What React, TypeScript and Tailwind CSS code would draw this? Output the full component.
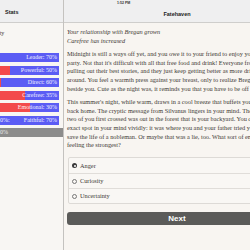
const BARS: ReadonlyArray<{ readonly label: string; readonly red: number; readonly left?: string }> = [
  { label: "Leader: 70%", red: 0 },
  { label: "Powerful: 50%", red: 10 },
  { label: "Direct: 60%", red: 1 },
  { label: "Carefree: 35%", red: 25 },
  { label: "Emotional: 30%", red: 30 },
  { label: "Faithful: 70%", red: 0, left: "0%:" },
];

const PARA_1 = [
  "Midnight is still a ways off yet, and you owe it to your friend to enjoy your",
  "party. Not that it's difficult with all that free food and drink! Everyone from",
  "pulling out their best stories, and they just keep getting better as more drinks",
  "around. You feel a warmth press against your breast, only to realize Bregan",
  "beside you. Cute as the night was, it reminds you that you have to be off at",
];

const PARA_2 = [
  "This summer's night, while warm, draws in a cool breeze that buffets you cold",
  "back home. The cryptic message from Silvanus lingers in your mind. The 'place",
  "two of you first crossed was out in the forest that is your backyard. You can",
  "exact spot in your mind vividly: it was where you and your father tried your",
  "save the life of a nobleman. Or maybe that was a lie, too. What sort of emotion",
  "feeling the strongest?",
];

const CHOICES = ["Anger", "Curiosity", "Uncertainty"];

export default function App() {
  return (
    <div className="h-[250px] w-[250px] overflow-hidden bg-[#f8f5f1] font-['Liberation_Serif',serif] text-[#3d3934]">
      <div className="flex h-full w-[290px]">
        {/* Sidebar — stats */}
        <aside className="flex w-[64px] shrink-0 flex-col border-r border-[#c4c2bf] bg-[#f8f6f3]">
          <div className="flex h-[23px] items-end border-b border-[#cfcecc] bg-[#efeff0] pb-[6px] pl-[5px]">
            <span className="font-['Liberation_Sans',sans-serif] text-[5.5px] font-bold text-[#222]">Stats</span>
          </div>
          <div className="flex flex-col pt-[6px]">
            <div className="-ml-[2px] text-[6px] leading-[8px]">ity</div>
            <div className="-ml-[2px] mt-[4px] text-[6px] leading-[8px]">r</div>
          </div>
          <div className="mt-[4px] flex w-[59px] flex-col gap-[3.5px]">
            {BARS.map((bar) => (
              <div key={bar.label} className="relative flex h-[9px] bg-[#5b5cf4]">
                <div className="h-full bg-[#f34a4b]" style={{ width: `${bar.red}px` }} />
                {bar.left && (
                  <span className="absolute left-0 top-0 text-[6px] leading-[9px] text-white/90">{bar.left}</span>
                )}
                <span className="absolute right-[2px] top-0 text-[6px] leading-[9px] text-white/90">{bar.label}</span>
              </div>
            ))}
            <div className="relative -mr-[4px] h-[9px] bg-[#8c8c8b]">
              <span className="absolute left-0 top-0 text-[6px] leading-[9px] text-white/80">0%</span>
            </div>
          </div>
        </aside>

        {/* Story */}
        <main className="flex flex-1 flex-col">
          <div className="flex h-[23px] flex-col border-b border-[#cfcecc] bg-[#efeff0]">
            <div className="h-[8px] pl-[53px] pt-[1px] font-['Liberation_Sans',sans-serif] text-[3.5px] font-bold leading-[5px] text-[#333]">
              1:52 PM
            </div>
            <div className="flex flex-1 items-center justify-center pb-[1px] font-['Liberation_Sans',sans-serif] text-[5.5px] font-bold text-[#222]">
              Fatehaven
            </div>
          </div>
          <div className="flex flex-col pl-[3px] pt-[5px] text-[6.3px] leading-[8.7px]">
            <p className="italic">Your relationship with Bregan grown</p>
            <p className="italic">Carefree has increased</p>
            <div className="mt-[4.5px] flex flex-col">
              {PARA_1.map((line) => (
                <p key={line} className="whitespace-nowrap">{line}</p>
              ))}
            </div>
            <div className="mt-[4.5px] flex flex-col">
              {PARA_2.map((line) => (
                <p key={line} className="whitespace-nowrap">{line}</p>
              ))}
            </div>
          </div>
          <div className="ml-[4px] mr-[3px] mt-[7px] flex flex-col rounded-[2px] border border-[#dddad6] bg-[#f9f7f4]">
            {CHOICES.map((choice, index) => (
              <div
                key={choice}
                className={`flex h-[15px] items-center gap-[3px] pl-[3px] ${index > 0 ? "border-t border-[#e0ddd9]" : ""}`}
              >
                {index === 0 ? (
                  <span className="flex h-[5px] w-[5px] items-center justify-center rounded-full bg-[#3a3a3a]">
                    <span className="h-[2px] w-[2px] rounded-full bg-white" />
                  </span>
                ) : (
                  <span className="h-[5px] w-[5px] rounded-full border-[0.5px] border-[#777]" />
                )}
                <span className="text-[6.3px] text-[#3d3934]">{choice}</span>
              </div>
            ))}
          </div>
          <button className="ml-[3px] mr-[3px] mt-[8px] flex h-[13px] items-center justify-center rounded-[3px] bg-[#5b5b59] font-['Liberation_Sans',sans-serif] text-[8px] font-bold text-white">
            Next
          </button>
        </main>
      </div>
    </div>
  );
}
